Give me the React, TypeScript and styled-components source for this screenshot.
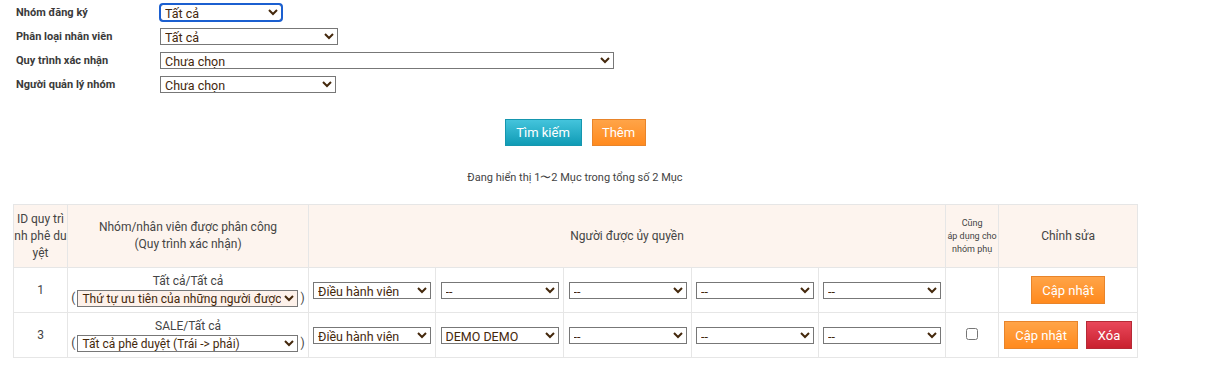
import styled, { createGlobalStyle } from 'styled-components';

const GlobalStyle = createGlobalStyle`
  body {
    margin: 0;
    background: #fff;
    font-family: Roboto, 'Liberation Sans', Arial, sans-serif;
    color: #333;
  }
`;

const Page = styled.div`
  width: 1124px;
  margin-left: 13px;
  padding-top: 4px;
`;

const Filters = styled.div`
  display: flex;
  flex-direction: column;
  gap: 7px;
  padding-left: 3px;
`;

const FilterRow = styled.div`
  display: flex;
  align-items: center;
  height: 17px;

  label {
    width: 144px;
    font-weight: 700;
    font-size: 11px;
    color: #3a3a3a;
  }
`;

const Select = styled.select<{ w: number; tint?: boolean; focused?: boolean; compact?: boolean }>`
  width: ${({ w }) => w}px;
  height: 17px;
  padding: 0;
  border: 1px solid #777;
  border-radius: ${({ focused }) => (focused ? '3px' : '0')};
  outline: ${({ focused }) => (focused ? '2px solid #1b5fd0' : 'none')};
  outline-offset: -1px;
  background: ${({ tint }) => (tint ? '#fdf1ea' : '#fff')};
  font-family: Roboto, 'Liberation Sans', Arial, sans-serif;
  font-size: ${({ compact }) => (compact ? '12px' : '12.5px')};
  color: #44280c;
`;

const Actions = styled.div`
  display: flex;
  justify-content: center;
  gap: 10px;
  margin-top: 26px;
`;

const Btn = styled.button<{ tone: 'teal' | 'orange' | 'red'; w: number; h: number }>`
  width: ${({ w }) => w}px;
  height: ${({ h }) => h}px;
  padding: 0;
  border: 1px solid
    ${({ tone }) => (tone === 'teal' ? '#1596ae' : tone === 'orange' ? '#e8842a' : '#b62a36')};
  background: ${({ tone }) =>
    tone === 'teal'
      ? 'linear-gradient(#44c4dc, #0f9bb5)'
      : tone === 'orange'
        ? 'linear-gradient(#ffa448, #ff8a1e)'
        : 'linear-gradient(#e9475a, #c9212f)'};
  color: #fff;
  font-family: Roboto, 'Liberation Sans', Arial, sans-serif;
  font-size: 13px;
  cursor: pointer;
`;

const Summary = styled.p`
  margin: 24px 0 0;
  text-align: center;
  font-size: 11px;
  color: #444;
`;

const Grid = styled.table`
  width: 1124px;
  margin-top: 19px;
  border-collapse: collapse;
  table-layout: fixed;
  font-size: 12px;
  color: #444;

  th,
  td {
    border: 1px solid #e6e6e6;
    text-align: center;
    vertical-align: middle;
    padding: 0;
  }

  th {
    height: 62px;
    background: #fdf4ee;
    font-weight: 400;
    line-height: 17px;
  }

  td {
    height: 44px;
  }
`;

const IdHead = styled.th`
  word-break: break-all;
`;

const SmallHead = styled.th`
  font-size: 9px;
  line-height: 13px !important;
`;

const GroupCell = styled.td`
  line-height: 17px;

  .wrap {
    display: flex;
    align-items: center;
    justify-content: center;
    gap: 2px;
  }
`;

const Box = styled.input`
  width: 12px;
  height: 12px;
  margin: 0;
`;

const EditCell = styled.td`
  .btns {
    display: flex;
    justify-content: center;
    gap: 8px;
  }
`;

const DASH = '--';

const rows = [
  {
    id: 1,
    group: 'Tất cả/Tất cả',
    flow: 'Thứ tự ưu tiên của những người được',
    tint: true,
    delegates: ['Điều hành viên', DASH, DASH, DASH, DASH],
    sub: false,
    remove: false,
  },
  {
    id: 3,
    group: 'SALE/Tất cả',
    flow: 'Tất cả phê duyệt (Trái -> phải)',
    tint: false,
    delegates: ['Điều hành viên', 'DEMO DEMO', DASH, DASH, DASH],
    sub: true,
    remove: true,
  },
];

export default function App() {
  return (
    <>
      <GlobalStyle />
      <Page>
        <Filters>
          <FilterRow>
            <label>Nhóm đăng ký</label>
            <Select w={122} focused defaultValue="a">
              <option value="a">Tất cả</option>
            </Select>
          </FilterRow>
          <FilterRow>
            <label>Phân loại nhân viên</label>
            <Select w={178}>
              <option>Tất cả</option>
            </Select>
          </FilterRow>
          <FilterRow>
            <label>Quy trình xác nhận</label>
            <Select w={454}>
              <option>Chưa chọn</option>
            </Select>
          </FilterRow>
          <FilterRow>
            <label>Người quản lý nhóm</label>
            <Select w={176}>
              <option>Chưa chọn</option>
            </Select>
          </FilterRow>
        </Filters>

        <Actions>
          <Btn tone="teal" w={77} h={27}>Tìm kiếm</Btn>
          <Btn tone="orange" w={54} h={27}>Thêm</Btn>
        </Actions>

        <Summary>Đang hiển thị 1〜2 Mục trong tổng số 2 Mục</Summary>

        <Grid>
          <colgroup>
            <col style={{ width: 54 }} />
            <col style={{ width: 241 }} />
            <col style={{ width: 127 }} />
            <col style={{ width: 128 }} />
            <col style={{ width: 128 }} />
            <col style={{ width: 127 }} />
            <col style={{ width: 127 }} />
            <col style={{ width: 53 }} />
            <col style={{ width: 139 }} />
          </colgroup>
          <thead>
            <tr>
              <IdHead>ID quy trình phê duyệt</IdHead>
              <th>
                Nhóm/nhân viên được phân công
                <br />
                (Quy trình xác nhận)
              </th>
              <th colSpan={5}>Người được ủy quyền</th>
              <SmallHead>
                Cũng
                <br />
                áp dụng cho
                <br />
                nhóm phụ
              </SmallHead>
              <th>Chỉnh sửa</th>
            </tr>
          </thead>
          <tbody>
            {rows.map((r) => (
              <tr key={r.id}>
                <td>{r.id}</td>
                <GroupCell>
                  {r.group}
                  <div className="wrap">
                    (
                    <Select w={221} tint={r.tint} compact>
                      <option>{r.flow}</option>
                    </Select>
                    )
                  </div>
                </GroupCell>
                {r.delegates.map((d, i) => (
                  <td key={i}>
                    <Select w={118}>
                      <option>{d}</option>
                    </Select>
                  </td>
                ))}
                <td>{r.sub && <Box type="checkbox" />}</td>
                <EditCell>
                  <div className="btns">
                    <Btn tone="orange" w={74} h={28}>Cập nhật</Btn>
                    {r.remove && (
                      <Btn tone="red" w={46} h={28}>Xóa</Btn>
                    )}
                  </div>
                </EditCell>
              </tr>
            ))}
          </tbody>
        </Grid>
      </Page>
    </>
  );
}
